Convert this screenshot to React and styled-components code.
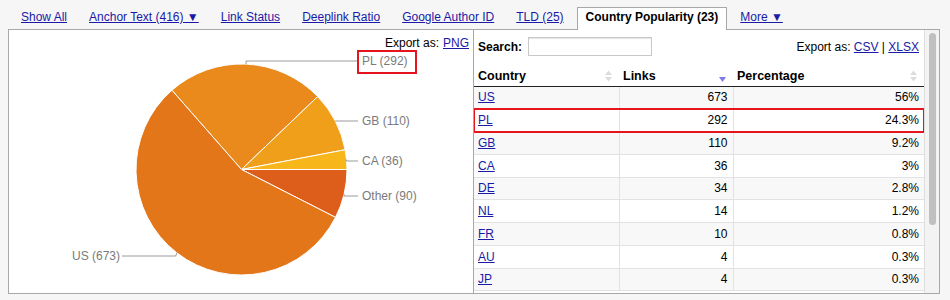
import React from 'react';
import styled, { createGlobalStyle } from 'styled-components';

const GlobalStyle = createGlobalStyle`
  body {
    margin: 0;
    background: #f6f6f6;
    font-family: "Liberation Sans", Arial, sans-serif;
    font-size: 12px;
    color: #000;
  }
`;

const TABS = [
  { id: 'all', label: 'Show All' },
  { id: 'anchor', label: 'Anchor Text (416) ▼' },
  { id: 'status', label: 'Link Status' },
  { id: 'deeplink', label: 'Deeplink Ratio' },
  { id: 'author', label: 'Google Author ID' },
  { id: 'tld', label: 'TLD (25)' },
  { id: 'country', label: 'Country Popularity (23)' },
  { id: 'more', label: 'More ▼' }
];

const ROWS = [
  { code: 'US', links: 673, pct: '56%' },
  { code: 'PL', links: 292, pct: '24.3%', marked: true },
  { code: 'GB', links: 110, pct: '9.2%' },
  { code: 'CA', links: 36, pct: '3%' },
  { code: 'DE', links: 34, pct: '2.8%' },
  { code: 'NL', links: 14, pct: '1.2%' },
  { code: 'FR', links: 10, pct: '0.8%' },
  { code: 'AU', links: 4, pct: '0.3%' },
  { code: 'JP', links: 4, pct: '0.3%' }
];

// pie slices in clockwise order, PL starts so that CA ends at 3 o'clock
const SLICES = [
  { label: 'PL (292)', value: 292, color: '#eb8a1c', labelY: 11, marked: true },
  { label: 'GB (110)', value: 110, color: '#f09f1b', labelY: 71 },
  { label: 'CA (36)', value: 36, color: '#f7b619', labelY: 111 },
  { label: 'Other (90)', value: 90, color: '#dc5e1a', labelY: 146 },
  { label: 'US (673)', value: 673, color: '#e4761a', labelY: 206, left: true }
];

const CX = 232.5;
const CY = 119.5;
const R = 105.5;

const point = (deg, r = R) => {
  const a = (deg * Math.PI) / 180;
  return [CX + r * Math.sin(a), CY - r * Math.cos(a)];
};

const Page = styled.div`
  width: 950px;
  height: 300px;
  overflow: hidden;
`;

const TabBar = styled.div`
  display: flex;
  align-items: flex-end;
  gap: 4px;
  height: 29px;
  padding-left: 12px;
`;

const Tab = styled.div`
  position: relative;
  z-index: 1;
  height: 23px;
  margin-bottom: -1px;
  padding: 0 8px;
  box-sizing: border-box;
  line-height: 18px;
  white-space: nowrap;
  border: 1px solid ${p => (p.$active ? '#a8a8a8' : 'transparent')};
  border-bottom: none;
  background: ${p => (p.$active ? '#fff' : 'transparent')};
  font-weight: ${p => (p.$active ? 'bold' : 'normal')};
  color: ${p => (p.$active ? '#000' : '#1a1aa6')};
  text-decoration: ${p => (p.$active ? 'none' : 'underline')};
  cursor: pointer;
`;

const Panel = styled.div`
  display: flex;
  box-sizing: border-box;
  width: 932px;
  height: 265px;
  margin-left: 8px;
  background: #fff;
  border: 1px solid #a8a8a8;
`;

const ChartPane = styled.div`
  display: flex;
  flex-direction: column;
  width: 465px;
  box-sizing: border-box;
  border-right: 1px solid #a8a8a8;
`;

const ExportLine = styled.div`
  display: flex;
  justify-content: flex-end;
  align-items: center;
  gap: 4px;
  height: 20px;
  padding: 6px 4px 0 0;
  box-sizing: border-box;
  line-height: 14px;
  white-space: nowrap;
`;

const Link = styled.a`
  color: #1a1aa6;
  text-decoration: underline;
  cursor: pointer;
`;

const ChartSvg = styled.svg`
  display: block;
  overflow: visible;
`;

const TablePane = styled.div`
  display: flex;
  flex: 1;
  min-width: 0;
`;

const TableArea = styled.div`
  width: 450px;
  overflow: hidden;
`;

const Toolbar = styled.div`
  display: flex;
  align-items: center;
  justify-content: space-between;
  height: 32px;
  padding: 1px 5px 0 4px;
  box-sizing: border-box;
`;

const SearchLabel = styled.label`
  display: flex;
  align-items: center;
  gap: 6px;
  font-weight: bold;
`;

const SearchInput = styled.input`
  width: 124px;
  height: 19px;
  box-sizing: border-box;
  border: 1px solid #c8c8c8;
  box-shadow: inset 0 1px 1px #e4e4e4;
  padding: 0 3px;
  font: inherit;
`;

const ExportRight = styled.div`
  white-space: nowrap;
`;

const Table = styled.table`
  width: 450px;
  table-layout: fixed;
  border-collapse: collapse;
`;

const HeadCell = styled.th`
  height: 24px;
  padding: 5px 6px 0 4px;
  box-sizing: border-box;
  border-bottom: 1px solid #222;
  text-align: left;
  font-size: 12.5px;
  font-weight: bold;
  line-height: 15px;
`;

const HeadInner = styled.div`
  display: flex;
  justify-content: space-between;
  align-items: center;
`;

const Row = styled.tr`
  height: 22.75px;
  background: ${p => (p.$odd ? '#f8f8f8' : '#fff')};
  outline: ${p => (p.$marked ? '2px solid #e5141d' : 'none')};
  outline-offset: -1px;
`;

const Cell = styled.td`
  padding: 0 ${p => (p.$align === 'right' ? 5 : 4)}px 0 4px;
  border-bottom: 1px solid #e2e2e2;
  border-left: ${p => (p.$first ? 'none' : '1px solid #e2e2e2')};
  text-align: ${p => p.$align || 'left'};
  line-height: 14px;
`;

const ScrollTrack = styled.div`
  width: 15px;
  box-sizing: border-box;
  padding: 3px 0 0 4px;
  background: #f3f3f3;
  border-left: 1px solid #dedede;
`;

const Thumb = styled.div`
  width: 7px;
  height: 192px;
  border-radius: 4px;
  background: #c0c0c0;
`;

const SortIcon = ({ mode }) => (
  <svg width="9" height="12" viewBox="0 0 9 12">
    {mode === 'down' ? (
      <path d="M1 7 L8 7 L4.5 12 Z" fill="#7c7cec" />
    ) : (
      <g fill="#dcdcdc">
        <path d="M1 5 L8 5 L4.5 0.5 Z" />
        <path d="M1 7 L8 7 L4.5 11.5 Z" />
      </g>
    )}
  </svg>
);

const PieChart = () => {
  const total = SLICES.reduce((s, d) => s + d.value, 0);
  let angle = 90 - ((292 + 110 + 36) / total) * 360;
  return (
    <ChartSvg width="464" height="242">
      {SLICES.map(slice => {
        const sweep = (slice.value / total) * 360;
        const start = angle;
        const end = angle + sweep;
        angle = end;
        const [x1, y1] = point(start);
        const [x2, y2] = point(end);
        const large = sweep > 180 ? 1 : 0;
        const [ex, ey] = point(start + sweep / 2);
        const lineEnd = slice.left ? 113 : 349;
        const bendX = slice.left ? ex - 1 : ex;
        return (
          <g key={slice.label}>
            <path
              d={`M${CX} ${CY} L${x1} ${y1} A${R} ${R} 0 ${large} 1 ${x2} ${y2} Z`}
              fill={slice.color}
              stroke="#fff"
              strokeWidth="1"
            />
            <path
              d={`M${ex} ${ey} L${bendX} ${slice.labelY} L${lineEnd} ${slice.labelY}`}
              fill="none"
              stroke="#9a9a9a"
              strokeWidth="1"
            />
            <text
              x={slice.left ? 111 : 353}
              y={slice.labelY + 4}
              textAnchor={slice.left ? 'end' : 'start'}
              fontFamily='"Liberation Sans", Arial, sans-serif'
              fontSize="12"
              fill="#7a7a7a"
            >
              {slice.label}
            </text>
            {slice.marked ? (
              <rect x="349" y="1" width="58" height="22" fill="none" stroke="#e5141d" strokeWidth="2" />
            ) : null}
          </g>
        );
      })}
    </ChartSvg>
  );
};

export default function App() {
  return (
    <Page>
      <GlobalStyle />
      <TabBar>
        {TABS.map(tab => (
          <Tab key={tab.id} $active={tab.id === 'country'}>
            {tab.label}
          </Tab>
        ))}
      </TabBar>
      <Panel>
        <ChartPane>
          <ExportLine>
            <span>Export as:</span>
            <Link>PNG</Link>
          </ExportLine>
          <PieChart />
        </ChartPane>
        <TablePane>
          <TableArea>
            <Toolbar>
              <SearchLabel>
                Search:
                <SearchInput type="text" />
              </SearchLabel>
              <ExportRight>
                Export as: <Link>CSV</Link> | <Link>XLSX</Link>
              </ExportRight>
            </Toolbar>
            <Table>
              <colgroup>
                <col style={{ width: 145 }} />
                <col style={{ width: 114 }} />
                <col style={{ width: 191 }} />
              </colgroup>
              <thead>
                <tr>
                  <HeadCell>
                    <HeadInner>Country<SortIcon /></HeadInner>
                  </HeadCell>
                  <HeadCell>
                    <HeadInner>Links<SortIcon mode="down" /></HeadInner>
                  </HeadCell>
                  <HeadCell>
                    <HeadInner>Percentage<SortIcon /></HeadInner>
                  </HeadCell>
                </tr>
              </thead>
              <tbody>
                {ROWS.map((row, i) => (
                  <Row key={row.code} $odd={i % 2 === 0} $marked={row.marked}>
                    <Cell $first>
                      <Link>{row.code}</Link>
                    </Cell>
                    <Cell $align="right">{row.links}</Cell>
                    <Cell $align="right">{row.pct}</Cell>
                  </Row>
                ))}
              </tbody>
            </Table>
          </TableArea>
          <ScrollTrack>
            <Thumb />
          </ScrollTrack>
        </TablePane>
      </Panel>
    </Page>
  );
}
